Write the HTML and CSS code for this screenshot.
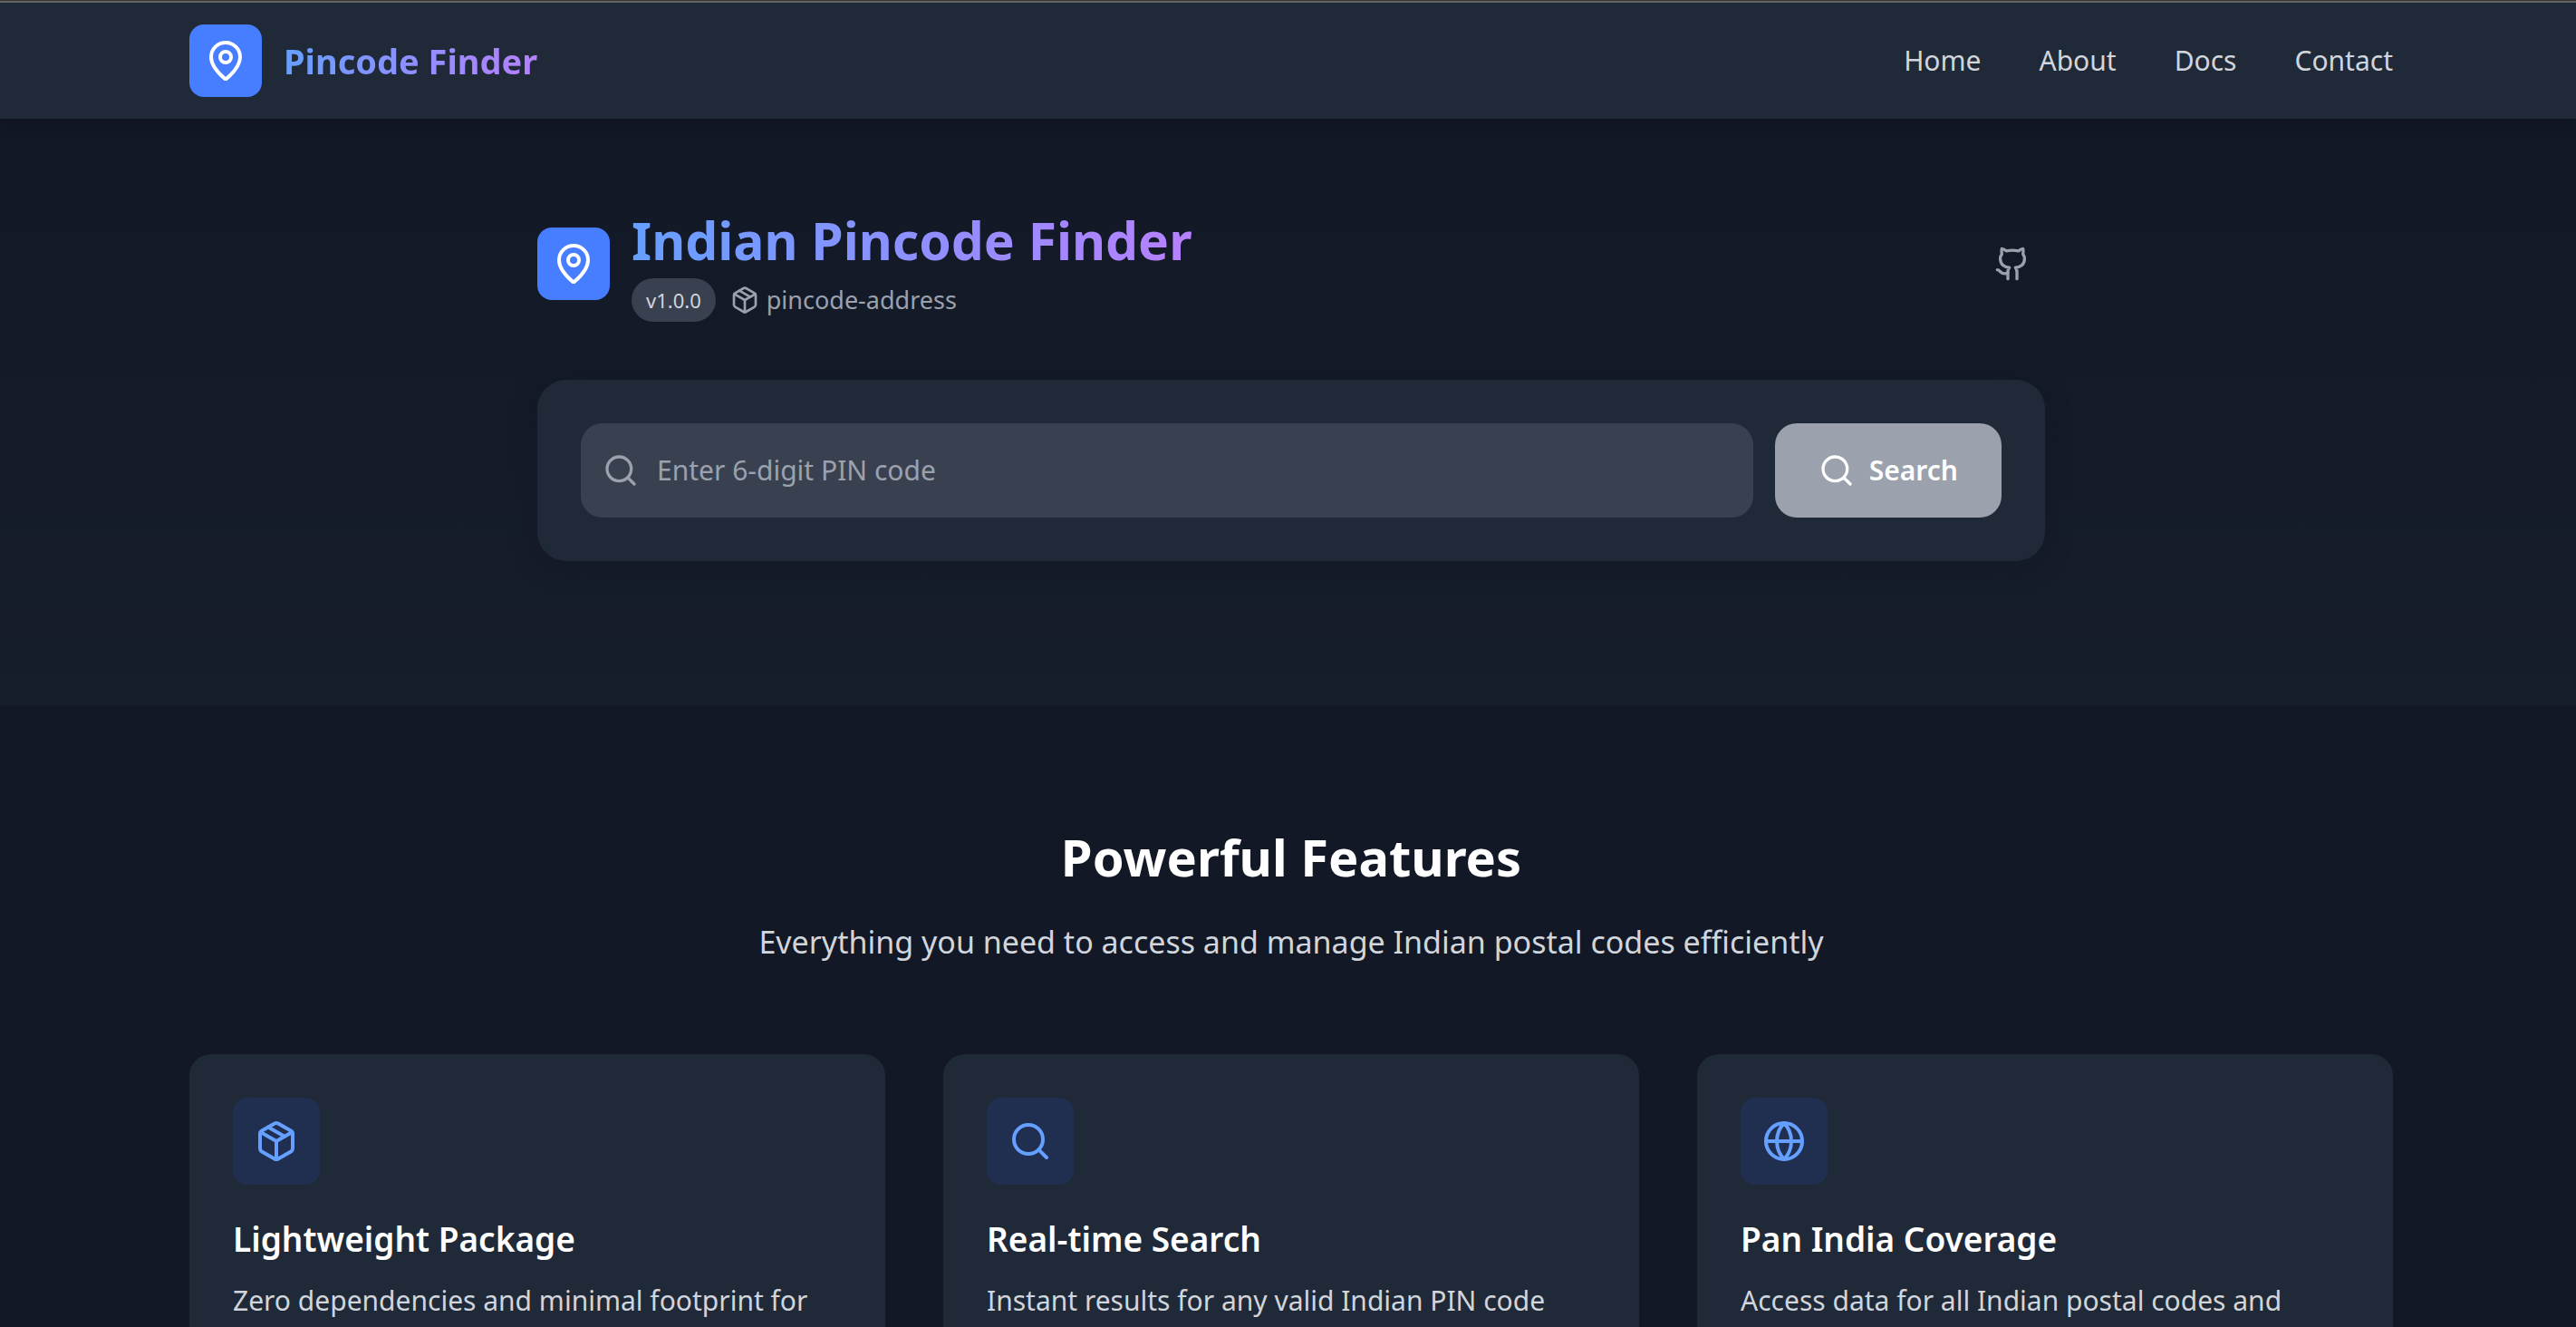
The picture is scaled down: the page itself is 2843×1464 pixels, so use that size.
FILE: index.html
```html
<!DOCTYPE html>
<html lang="en">
<head>
  <meta charset="utf-8">
  <meta name="viewport" content="width=device-width, initial-scale=1">
  <title>Pincode Finder</title>
  <link rel="stylesheet" href="styles.css">
</head>
<body>
  <svg class="sprite" aria-hidden="true">
    <symbol id="icon-pin" viewBox="0 0 24 24">
      <path d="M20 10c0 4.993-5.539 10.193-7.399 11.799a1 1 0 0 1-1.202 0C9.539 20.193 4 14.993 4 10a8 8 0 0 1 16 0"/>
      <circle cx="12" cy="10" r="3"/>
    </symbol>
    <symbol id="icon-package" viewBox="0 0 24 24">
      <path d="M11 21.73a2 2 0 0 0 2 0l7-4A2 2 0 0 0 21 16V8a2 2 0 0 0-1-1.73l-7-4a2 2 0 0 0-2 0l-7 4A2 2 0 0 0 3 8v8a2 2 0 0 0 1 1.73z"/>
      <path d="M12 22V12"/>
      <path d="M3.290 7 12 12l8.710-5"/>
      <path d="m7.500 4.270 9 5.150"/>
    </symbol>
    <symbol id="icon-search" viewBox="0 0 24 24">
      <circle cx="11" cy="11" r="8"/>
      <path d="m21 21-4.300-4.300"/>
    </symbol>
    <symbol id="icon-globe" viewBox="0 0 24 24">
      <circle cx="12" cy="12" r="10"/>
      <path d="M12 2a14.500 14.500 0 0 0 0 20 14.500 14.500 0 0 0 0-20"/>
      <path d="M2 12h20"/>
    </symbol>
    <symbol id="icon-github" viewBox="0 0 24 24">
      <path d="M15 22v-4a4.800 4.800 0 0 0-1-3.500c3 0 6-2 6-5.500.080-1.250-.270-2.480-1-3.500.280-1.150.280-2.350 0-3.500 0 0-1 0-3 1.500-2.640-.500-5.360-.500-8 0C6 2 5 2 5 2c-.300 1.150-.300 2.350 0 3.500A5.403 5.403 0 0 0 4 9c0 3.500 3 5.500 6 5.500-.390.490-.680 1.050-.850 1.650-.170.600-.220 1.230-.150 1.850v4"/>
      <path d="M9 18c-4.510 2-5-2-7-2"/>
    </symbol>
  </svg>

  <header class="site-header">
    <div class="container header-row">
      <a class="brand" href="#home">
        <span class="logo"><svg class="icon icon-lg"><use href="#icon-pin"/></svg></span>
        <span class="brand-name gradient-text">Pincode Finder</span>
      </a>
      <nav class="nav" aria-label="Main">
        <a href="#home">Home</a>
        <a href="#about">About</a>
        <a href="#docs">Docs</a>
        <a href="#contact">Contact</a>
      </nav>
    </div>
  </header>

  <main>
    <section class="hero" id="home">
      <div class="hero-inner">
        <div class="hero-head">
          <span class="logo"><svg class="icon icon-lg"><use href="#icon-pin"/></svg></span>
          <div class="hero-titles">
            <h1 class="hero-title gradient-text">Indian Pincode Finder</h1>
            <div class="meta">
              <span class="badge">v1.0.0</span>
              <a class="package-link" href="#package">
                <svg class="icon icon-sm"><use href="#icon-package"/></svg>
                <span>pincode-address</span>
              </a>
            </div>
          </div>
          <a class="github-link" href="#github" aria-label="GitHub repository">
            <svg class="icon icon-md"><use href="#icon-github"/></svg>
          </a>
        </div>

        <form class="search-card">
          <div class="field">
            <svg class="icon icon-md field-icon"><use href="#icon-search"/></svg>
            <input class="field-input" type="text" inputmode="numeric" maxlength="6" placeholder="Enter 6-digit PIN code" aria-label="PIN code">
          </div>
          <button class="search-button" type="submit" disabled>
            <svg class="icon icon-md"><use href="#icon-search"/></svg>
            <span>Search</span>
          </button>
        </form>
      </div>
    </section>

    <section class="features" id="about">
      <div class="container">
        <h2 class="features-title">Powerful Features</h2>
        <p class="features-lead">Everything you need to access and manage Indian postal codes efficiently</p>
        <div class="cards">
          <article class="card">
            <span class="card-icon"><svg class="icon icon-lg"><use href="#icon-package"/></svg></span>
            <h3 class="card-title">Lightweight Package</h3>
            <p class="card-text">Zero dependencies and minimal footprint for</p>
          </article>
          <article class="card">
            <span class="card-icon"><svg class="icon icon-lg"><use href="#icon-search"/></svg></span>
            <h3 class="card-title">Real-time Search</h3>
            <p class="card-text">Instant results for any valid Indian PIN code</p>
          </article>
          <article class="card">
            <span class="card-icon"><svg class="icon icon-lg"><use href="#icon-globe"/></svg></span>
            <h3 class="card-title">Pan India Coverage</h3>
            <p class="card-text">Access data for all Indian postal codes and</p>
          </article>
        </div>
      </div>
    </section>
  </main>
</body>
</html>
```
FILE: styles.css
```css
:root {
  --page: #121826;
  --surface: #202937;
  --field: #394150;
  --text: #d1d5dc;
  --muted: #9ba1ad;
  --blue: #467eff;
  --blue-light: #659fff;
  --purple-light: #b780ff;
  --blue-tint: #202e50;
}

* {
  box-sizing: border-box;
}

html {
  overflow: hidden;
}

body {
  margin: 0;
  border-top: 1px solid #363636;
  background: var(--page);
  color: #fff;
  font-family: "Segoe UI", "Noto Sans", sans-serif;
  font-size: 30px;
  line-height: 48px;
}

h1,
h2,
h3,
p {
  margin: 0;
}

a {
  color: inherit;
  text-decoration: none;
}

.sprite {
  display: none;
}

.icon {
  display: block;
  flex: none;
  fill: none;
  stroke: currentColor;
  stroke-width: 2;
  stroke-linecap: round;
  stroke-linejoin: round;
}

.icon-sm {
  width: 32px;
  height: 32px;
}

.icon-md {
  width: 40px;
  height: 40px;
}

.icon-lg {
  width: 48px;
  height: 48px;
}

.gradient-text {
  background: linear-gradient(to right, var(--blue-light), var(--purple-light));
  background-clip: text;
  -webkit-background-clip: text;
  color: transparent;
}

.site-header,
.hero,
.features {
  padding-left: 7px;
}

.container {
  max-width: 2560px;
  margin: 0 auto;
  padding: 0 64px;
}

.site-header {
  position: relative;
  border-top: 2px solid #656565;
  background: var(--surface);
  box-shadow: 0 4px 12px rgba(16, 18, 28, 0.4);
}

.header-row {
  display: flex;
  align-items: center;
  justify-content: space-between;
  padding-top: 24px;
  padding-bottom: 24px;
}

.brand {
  display: flex;
  align-items: center;
  gap: 24px;
}

.logo {
  flex: none;
  padding: 16px;
  border-radius: 16px;
  background: var(--blue);
}

.brand-name {
  font-size: 38px;
  font-weight: 700;
  line-height: 56px;
}

.nav {
  display: flex;
  gap: 64px;
  color: var(--text);
}

.hero {
  padding-top: 96px;
  padding-bottom: 160px;
  background: linear-gradient(to bottom, #121826, #161d2b);
}

.hero-inner {
  max-width: 1664px;
  margin: 0 auto;
}

.hero-head {
  display: flex;
  align-items: center;
  gap: 24px;
  margin-bottom: 64px;
}

.hero-titles {
  flex: 1;
}

.hero-title {
  width: fit-content;
  font-size: 57px;
  font-weight: 700;
  line-height: 76px;
}

.meta {
  display: flex;
  align-items: center;
  gap: 16px;
  margin-top: 4px;
}

.badge {
  padding: 8px 16px;
  border-radius: 24px;
  background: var(--field);
  color: var(--text);
  font-size: 22px;
  line-height: 32px;
}

.package-link {
  display: flex;
  align-items: center;
  gap: 8px;
  color: var(--muted);
  font-size: 27px;
  line-height: 40px;
}

.github-link {
  padding: 16px;
  color: var(--muted);
}

.search-card {
  display: flex;
  gap: 24px;
  padding: 48px;
  border-radius: 32px;
  background: var(--surface);
  box-shadow: 0 8px 32px rgba(16, 20, 34, 0.2);
}

.field {
  position: relative;
  display: flex;
  flex: 1;
}

.field-icon {
  position: absolute;
  top: 32px;
  left: 24px;
  color: var(--muted);
}

.field-input {
  flex: 1;
  min-width: 0;
  padding: 28px 32px 28px 84px;
  border: 0;
  border-radius: 24px;
  background: var(--field);
  color: #fff;
  font: inherit;
  line-height: 48px;
}

.field-input::placeholder {
  color: var(--muted);
  opacity: 1;
}

.search-button {
  display: flex;
  align-items: center;
  gap: 16px;
  padding: 28px 48px;
  border: 0;
  border-radius: 24px;
  background: var(--muted);
  color: #fff;
  font: inherit;
  font-weight: 600;
}

.features {
  padding-top: 128px;
  padding-bottom: 128px;
}

.features-title {
  font-size: 56px;
  font-weight: 700;
  line-height: 76px;
  text-align: center;
}

.features-lead {
  margin-top: 28px;
  color: var(--text);
  font-size: 34px;
  line-height: 56px;
  text-align: center;
}

.cards {
  display: grid;
  grid-template-columns: repeat(3, 1fr);
  gap: 64px;
  margin-top: 96px;
}

.card {
  padding: 48px;
  border-radius: 24px;
  background: var(--surface);
}

.card-icon {
  display: block;
  width: fit-content;
  margin-bottom: 32px;
  padding: 24px;
  border-radius: 16px;
  background: var(--blue-tint);
  color: var(--blue-light);
}

.card-title {
  margin-bottom: 16px;
  font-size: 37px;
  font-weight: 600;
  line-height: 56px;
}

.card-text {
  color: var(--text);
}
```
